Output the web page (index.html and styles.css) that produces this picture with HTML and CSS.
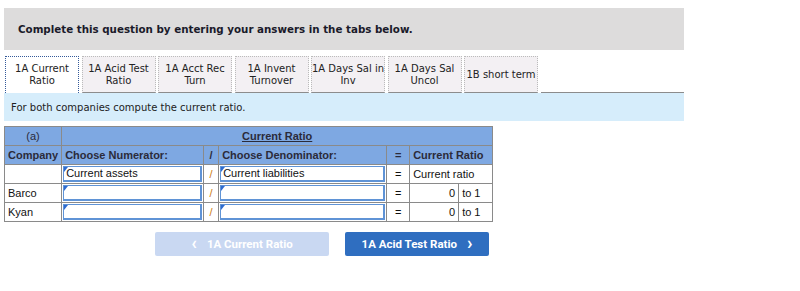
FILE: index.html
```html
<!DOCTYPE html>
<html lang="en">
<head>
  <meta charset="UTF-8" />
  <meta name="viewport" content="width=device-width, initial-scale=1.0"/>
  <title>Current Ratio</title>
  <link rel="stylesheet" href="styles.css">
</head>
<body>
  <div class="page">
    <div class="banner">Complete this question by entering your answers in the tabs below.</div>

    <div class="tabs">
      <div class="tab active">1A Current<br>Ratio</div>
      <div class="tab">1A Acid Test<br>Ratio</div>
      <div class="tab">1A Acct Rec<br>Turn</div>
      <div class="tab">1A Invent<br>Turnover</div>
      <div class="tab">1A Days Sal in<br>Inv</div>
      <div class="tab">1A Days Sal<br>Uncol</div>
      <div class="tab">1B short term</div>
      <div class="tab-rest"></div>
    </div>

    <div class="prompt">For both companies compute the current ratio.</div>

    <table class="grid">
      <colgroup>
        <col class="c-company">
        <col class="c-num">
        <col class="c-op">
        <col class="c-den">
        <col class="c-eq">
        <col class="c-val">
        <col class="c-unit">
      </colgroup>
      <tr class="head">
        <th class="center plain">(a)</th>
        <th colspan="6" class="center title">Current Ratio</th>
      </tr>
      <tr class="head">
        <th class="right">Company</th>
        <th>Choose Numerator:</th>
        <th class="center">/</th>
        <th>Choose Denominator:</th>
        <th class="center">=</th>
        <th colspan="2">Current Ratio</th>
      </tr>
      <tr>
        <td></td>
        <td class="field"><div class="input">Current assets</div></td>
        <td class="center slash">/</td>
        <td class="field"><div class="input">Current liabilities</div></td>
        <td class="center">=</td>
        <td colspan="2">Current ratio</td>
      </tr>
      <tr>
        <td>Barco</td>
        <td class="field"><div class="input"></div></td>
        <td class="center slash">/</td>
        <td class="field"><div class="input"></div></td>
        <td class="center">=</td>
        <td class="right">0</td>
        <td>to 1</td>
      </tr>
      <tr>
        <td>Kyan</td>
        <td class="field"><div class="input"></div></td>
        <td class="center slash">/</td>
        <td class="field"><div class="input"></div></td>
        <td class="center">=</td>
        <td class="right">0</td>
        <td>to 1</td>
      </tr>
    </table>

    <div class="nav">
      <button class="nav-btn prev" disabled><span class="chev">&lsaquo;</span> 1A Current Ratio</button>
      <button class="nav-btn next">1A Acid Test Ratio <span class="chev">&rsaquo;</span></button>
    </div>
  </div>
</body>
</html>
```

FILE: styles.css
```css
body {
  margin: 0;
  background: #fff;
  font-family: "DejaVu Sans", Verdana, sans-serif;
  color: #111;
}

.page {
  width: 680px;
  padding: 8px 0 0 4px;
}

.banner {
  height: 42px;
  display: flex;
  align-items: center;
  padding-left: 14px;
  background: #dddcdc;
  font-size: 10.3px;
  font-weight: bold;
  color: #1a1a2a;
}

.tabs {
  display: flex;
  gap: 2.5px;
  margin-top: 6px;
  padding-left: 1px;
  height: 37px;
}

.tab {
  width: 74px;
  box-sizing: border-box;
  border: 1px dotted #bbb;
  border-bottom: 1px solid #8c8c8c;
  background: #f3f0f3;
  font-size: 10px;
  line-height: 12px;
  text-align: center;
  white-space: nowrap;
  display: flex;
  align-items: center;
  justify-content: center;
  color: #222;
}

.tab.active {
  background: #fff;
  border: 1px dotted #345a9a;
  border-bottom: none;
}

.tab-rest {
  flex: 1;
  border-bottom: 1px solid #8c8c8c;
}

.prompt {
  height: 28px;
  display: flex;
  align-items: center;
  padding-left: 7px;
  background: #d6edfb;
  font-size: 10px;
  color: #222;
}

.grid {
  margin-top: 5px;
  border-collapse: collapse;
  border: 1px solid #6a6a6a;
  font-family: "Liberation Sans", Arial, sans-serif;
  font-size: 11px;
  color: #111;
}

.c-company { width: 57px; }
.c-num { width: 142px; }
.c-op { width: 15px; }
.c-den { width: 168px; }
.c-eq { width: 23px; }
.c-val { width: 49px; }
.c-unit { width: 34px; }

.grid th,
.grid td {
  border: 1px solid #8a8a8a;
  height: 18px;
  padding: 0 3px;
  text-align: left;
  white-space: nowrap;
}

.grid .head th {
  background: #7ea8e2;
  font-weight: bold;
  color: #2b2b3a;
}

.grid .head th.plain { font-weight: normal; }
.grid .head th.center { text-align: center; }
.grid .head th.right { text-align: right; }

.grid th.title {
  text-decoration: underline;
}

.grid td.center { text-align: center; }
.grid td.right { text-align: right; }

.grid td.slash {
  color: #cc7a10;
}

.grid td.field {
  height: 16px;
  padding: 1px;
}

.input {
  position: relative;
  height: 13px;
  border: 1px solid #5f93d6;
  border-right-width: 2px;
  border-bottom-width: 2px;
  line-height: 13px;
  padding-left: 2px;
  background: #fff;
}

.input::before {
  content: "";
  position: absolute;
  top: 0;
  left: 0;
  border-top: 5px solid #2e6bd0;
  border-right: 4px solid transparent;
}

.nav {
  display: flex;
  gap: 16px;
  margin: 10px 0 0 151px;
}

.nav-btn {
  height: 24px;
  border: none;
  border-radius: 2px;
  font-family: Roboto, "Liberation Sans", sans-serif;
  font-size: 11.5px;
  font-weight: bold;
  color: #fff;
  display: flex;
  align-items: center;
  justify-content: center;
  gap: 10px;
}

.nav-btn.prev {
  width: 174px;
  background: #c9d8f2;
}

.nav-btn.next {
  width: 144px;
  background: #2f6ec0;
}

.chev {
  font-size: 18px;
  line-height: 1;
  margin-top: -2px;
}
```
